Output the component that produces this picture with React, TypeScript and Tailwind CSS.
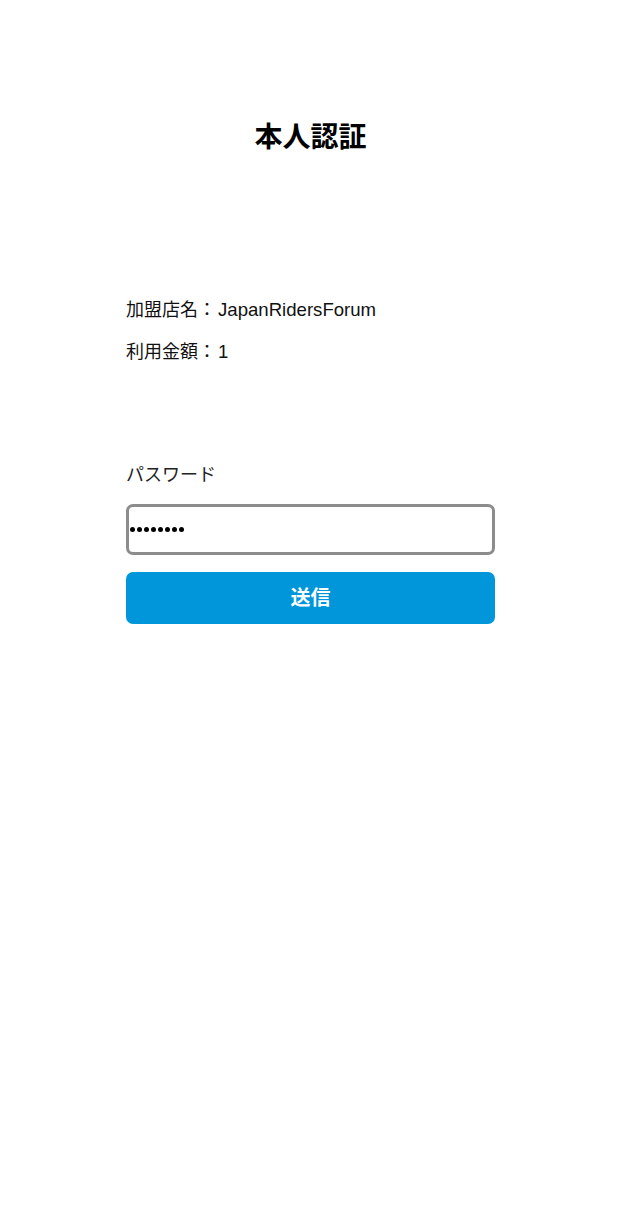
export default function App() {
    return (
        <div
            className="min-h-[1209px] w-full bg-white text-black"
            style={{ fontFamily: '"Liberation Sans", "Noto Sans CJK JP", sans-serif' }}
        >
            <div className="mx-auto w-[369px] pt-[120px]">
                <h1 className="text-center text-[28px] leading-[36px] font-bold">本人認証</h1>

                <div className="mt-[141px] text-[18px] leading-[26px] text-[#111]">
                    <p>
                        加盟店名：<span className="ml-[2px] text-[18.6px]">JapanRidersForum</span>
                    </p>
                    <p className="mt-[16px]">
                        利用金額：<span className="ml-[2px] text-[18.6px]">1</span>
                    </p>
                </div>

                <label className="mt-[97px] block text-[18px] leading-[26px] text-[#222]">パスワード</label>
                <div className="mt-[16px] flex h-[51px] items-center rounded-[7px] border-[3px] border-[#8c8c8c] bg-white">
                    <span className="flex gap-[2px] pl-[1px]">
                        {Array.from({ length: 8 }).map((_, i) => (
                            <span key={i} className="block h-[5px] w-[5px] rounded-full bg-black" />
                        ))}
                    </span>
                </div>
                <button className="mt-[17px] flex h-[52px] w-full items-center justify-center rounded-[7px] bg-[#0096d9] text-[20px] font-bold text-white">
                    送信
                </button>
            </div>
        </div>
    );
}
